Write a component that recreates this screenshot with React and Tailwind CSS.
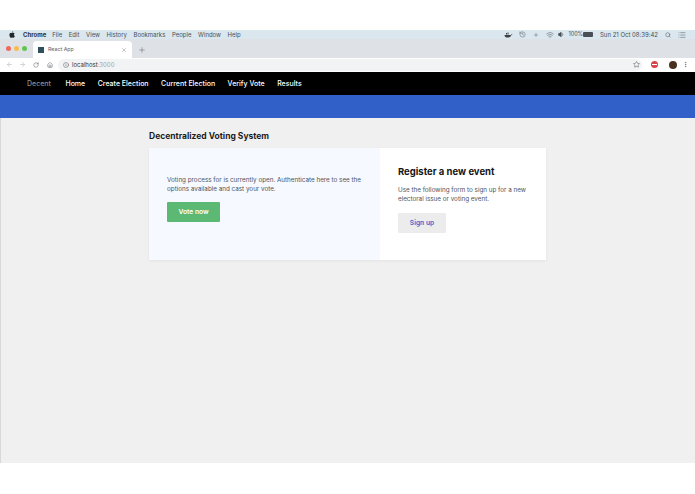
import { Search, Star, ArrowLeft, ArrowRight, RotateCw, Home, Info, Plus, X, Wifi, Volume1, History, List, MoreVertical } from "lucide-react";

const menuItems = ["File", "Edit", "View", "History", "Bookmarks", "People", "Window", "Help"];
const navItems = ["Home", "Create Election", "Current Election", "Verify Vote", "Results"];

function MenuBar() {
    return (
        <div className="h-[9px] bg-[#dbe7ef] flex items-center justify-between text-[6px] text-[#4a4f55] pl-[9px] pr-[9px] font-['Inter',sans-serif]">
            <div className="flex items-center">
                <svg width="6" height="7" viewBox="0 0 12 14" className="mr-[8px]">
                    <path d="M8.5 3.4c1.2 0 2.2.6 2.8 1.5-1 .7-1.5 1.5-1.5 2.6 0 1.200.7 2.200 1.900 2.700-.6 1.700-1.800 3.500-3 3.500-.7 0-1.200-.5-2.100-.5s-1.500.5-2.200.5C2.800 13.700.8 10.500.8 7.800c0-2.700 1.700-4.300 3.400-4.300.9 0 1.700.6 2.200.6s1.200-.7 2.100-.7zM8.400.3c.1 1.300-1 2.800-2.500 2.700C5.800 1.700 7 .4 8.400.3z" fill="#22262a" />
                </svg>
                <span className="font-bold text-[#2b3036] mr-[6px]">Chrome</span>
                <div className="flex gap-[6.600px]">
                    {menuItems.map((item) => (
                        <span key={item}>{item}</span>
                    ))}
                </div>
            </div>
            <div className="flex items-center text-[5.500px]">
                <svg width="9" height="6" viewBox="0 0 18 12" className="mr-[6px]">
                    <path d="M1 6h13c0 3-2 5-5 5H5C3 11 1 9 1 6zM4 2h2v3H4zM7 2h2v3H7zM7-1h2v2H7zM15 4l2 1-3 2z" fill="#3a3f44" />
                </svg>
                <History size={7} strokeWidth={1.500} className="mr-[7px]" />
                <Plus size={6} strokeWidth={1.500} className="mr-[7px]" />
                <Wifi size={8} strokeWidth={1.500} className="mr-[4px]" />
                <Volume1 size={7} strokeWidth={2} fill="#4a4f55" className="mr-[3px]" />
                <span>100%</span>
                <div className="w-[10px] h-[5px] bg-[#4a4f55] rounded-[1px] mr-[7px]" />
                <span className="text-[6px] mr-[7px]">Sun 21 Oct 08:39:42</span>
                <Search size={6} strokeWidth={2} className="mr-[7px]" />
                <List size={8} strokeWidth={1.500} />
            </div>
        </div>
    );
}

function TabStrip() {
    return (
        <div className="h-[19px] bg-[#dee1e6] flex items-end pl-[6px] font-['Inter',sans-serif]">
            <div className="flex items-center gap-[3px] h-[19px] mr-[6px]">
                <div className="w-[5px] h-[5px] rounded-full bg-[#ec6a5e]" />
                <div className="w-[5px] h-[5px] rounded-full bg-[#f4bf4f]" />
                <div className="w-[5px] h-[5px] rounded-full bg-[#61c554]" />
            </div>
            <div className="w-[99px] h-[17px] bg-white rounded-t-[4px] flex items-center pl-[5px] pr-[5px]">
                <div className="w-[6px] h-[6px] bg-[#2f4f5f] mr-[4px]" />
                <span className="text-[5.300px] text-[#5f6368] flex-1">React App</span>
                <X size={6} strokeWidth={1.500} className="text-[#5f6368]" />
            </div>
            <div className="h-[17px] flex items-center ml-[6px]">
                <Plus size={8} strokeWidth={1.500} className="text-[#5f6368]" />
            </div>
        </div>
    );
}

function Toolbar() {
    return (
        <div className="h-[14px] bg-white flex items-center pb-[1px] pl-[6px] pr-[6px] text-[#5f6368] font-['Inter',sans-serif]">
            <ArrowLeft size={7} className="text-[#b4b7bb] mr-[6px]" />
            <ArrowRight size={7} className="text-[#b4b7bb] mr-[7px]" />
            <RotateCw size={6} className="mr-[8px]" />
            <Home size={6} className="mr-[5px]" />
            <div className="flex-1 h-[12px] bg-[#f1f3f4] rounded-full flex items-center pl-[5px] pr-[2px]">
                <Info size={6} className="mr-[3px]" />
                <span className="text-[6px] text-[#2f3338]">localhost</span>
                <span className="text-[6px] text-[#a0a4a8]">:3000</span>
                <Star size={7} className="ml-auto" />
            </div>
            <div className="w-[7px] h-[7px] rounded-full bg-[#d9434b] ml-[9px] mr-[11px] flex items-center justify-center">
                <div className="w-[5px] h-[1px] bg-white" />
            </div>
            <div className="w-[8px] h-[8px] rounded-full bg-[#4a3020] mr-[5px]" />
            <MoreVertical size={7} />
        </div>
    );
}

export default function App() {
    return (
        <div className="w-[695px] h-[494px] bg-white flex flex-col font-['Inter',sans-serif] overflow-hidden">
            <div className="h-[30px] shrink-0" />
            <MenuBar />
            <TabStrip />
            <Toolbar />

            <nav className="h-[23px] bg-black flex items-center pt-[1px] pl-[27px] gap-[12.500px] text-[7px] font-medium text-white">
                <span className="text-[#8f8f8f] mr-[2px]">Decent</span>
                {navItems.map((item) => (
                    <span key={item}>{item}</span>
                ))}
            </nav>
            <div className="h-[23px] bg-[#3060c8]" />

            <main className="h-[345px] bg-[#f0f0f0] border-l border-[#d8d8d8] pl-[148px] pt-[13px]">
                <h1 className="text-[8.500px] leading-[11px] font-bold text-[#1c1c1c] mb-[6px]">Decentralized Voting System</h1>
                <div className="w-[397px] h-[112px] flex shadow-[0_1px_3px_rgba(0,0,0,0.06)]">
                    <div className="w-[231px] bg-[#f6f9ff] pl-[18px] pr-[12px] pt-[28px]">
                        <p className="text-[6.300px] leading-[9px] text-[#4f5359]">
                            Voting process for is currently open. Authenticate here to see the options available and cast your vote.
                        </p>
                        <button className="block w-[53px] h-[20px] mt-[8px] bg-[#5cb973] rounded-[1px] text-[6.700px] font-semibold text-white">
                            Vote now
                        </button>
                    </div>
                    <div className="flex-1 bg-white pl-[18px] pr-[14px] pt-[17px]">
                        <h2 className="text-[9.500px] leading-[14px] font-bold text-[#161616]">Register a new event</h2>
                        <p className="text-[6.300px] leading-[9px] text-[#4f5359] mt-[7px]">
                            Use the following form to sign up for a new electoral issue or voting event.
                        </p>
                        <button className="block w-[48px] h-[20px] mt-[9px] bg-[#ececec] rounded-[1px] text-[6.700px] font-semibold text-[#3f66cc]">
                            Sign up
                        </button>
                    </div>
                </div>
            </main>
        </div>
    );
}
